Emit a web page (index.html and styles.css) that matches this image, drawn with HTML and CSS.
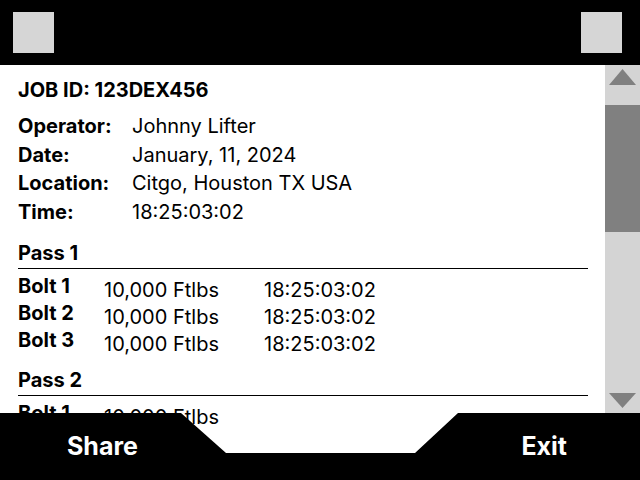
FILE: index.html
```html
<!DOCTYPE html>
<html>
<head>
<meta charset="utf-8">
<link rel="stylesheet" href="styles.css">
</head>
<body>
<div class="screen">
  <header class="topbar">
    <div class="square"></div>
    <div class="square"></div>
  </header>
  <div class="main">
    <section class="content">
      <h1 class="job">JOB ID: 123DEX456</h1>
      <div class="info">
        <div class="label">Operator:</div><div class="value">Johnny Lifter</div>
        <div class="label">Date:</div><div class="value">January, 11, 2024</div>
        <div class="label">Location:</div><div class="value">Citgo, Houston TX USA</div>
        <div class="label">Time:</div><div class="value">18:25:03:02</div>
      </div>
      <div class="pass">
        <h2 class="pass-title">Pass 1</h2>
        <div class="bolts">
          <div class="bolt">Bolt 1</div><div class="torque">10,000 Ftlbs</div><div class="stamp">18:25:03:02</div>
          <div class="bolt">Bolt 2</div><div class="torque">10,000 Ftlbs</div><div class="stamp">18:25:03:02</div>
          <div class="bolt">Bolt 3</div><div class="torque">10,000 Ftlbs</div><div class="stamp">18:25:03:02</div>
        </div>
      </div>
      <div class="pass pass-next">
        <h2 class="pass-title">Pass 2</h2>
        <div class="bolts">
          <div class="bolt">Bolt 1</div><div class="torque">10,000 Ftlbs</div>
        </div>
      </div>
    </section>
    <aside class="scrollbar">
      <div class="arrow arrow-up">
        <svg width="27" height="16" viewBox="0 0 27 16"><polygon points="13.5,0 27,16 0,16" fill="#808080"/></svg>
      </div>
      <div class="thumb"></div>
      <div class="track"></div>
      <div class="arrow arrow-down">
        <svg width="27" height="15" viewBox="0 0 27 15"><polygon points="0,0 27,0 13.5,15" fill="#808080"/></svg>
      </div>
    </aside>
  </div>
  <footer class="bottombar">
    <span class="btn">Share</span>
    <span class="btn">Exit</span>
  </footer>
</div>
</body>
</html>
```

FILE: styles.css
```css
* { box-sizing: border-box; margin: 0; padding: 0; }
html, body { width: 640px; height: 480px; overflow: hidden; background: #fff; }
body { font-family: Inter, "Noto Sans", sans-serif; color: #000; }

.screen { position: relative; width: 640px; height: 480px; display: flex; flex-direction: column; }

.topbar {
  height: 65px;
  background: #000;
  display: flex;
  justify-content: space-between;
  padding: 12px 18px 0 13px;
}
.square { width: 41px; height: 41px; background: #d6d6d6; }

.main { flex: 1; display: flex; min-height: 0; }

.content {
  flex: 1;
  overflow: hidden;
  padding: 13px 17px 0 18px;
}

.job { font-size: 20px; font-weight: 700; line-height: 24px; }

.info {
  display: grid;
  grid-template-columns: 114px auto;
  margin-top: 10px;
  font-size: 20px;
  line-height: 28.67px;
}
.label { font-weight: 700; }

.pass { margin-top: 14px; }
.pass-next { margin-top: 12px; }
.pass-title {
  font-size: 20px;
  font-weight: 700;
  line-height: 24px;
  padding-bottom: 3px;
  border-bottom: 1px solid #000;
}
.bolts {
  display: grid;
  grid-template-columns: 86px 160px auto;
  grid-auto-rows: 27px;
  font-size: 20px;
  line-height: 22px;
  padding-top: 6px;
}
.bolt { font-weight: 700; }
.torque, .stamp { padding-top: 4px; }

.scrollbar {
  width: 35px;
  height: 348px;
  background: #d4d4d4;
  display: flex;
  flex-direction: column;
  align-items: stretch;
}
.arrow { display: flex; justify-content: center; }
.arrow svg { display: block; }
.arrow-up { height: 40px; padding-top: 4px; }
.thumb { height: 127px; background: #808080; }
.track { flex: 1; }
.arrow-down { height: 20px; }

.bottombar {
  position: absolute;
  left: 0;
  bottom: 0;
  width: 640px;
  height: 67px;
  background: #000;
  clip-path: polygon(0 0, 181px 0, 226px 40px, 415px 40px, 458px 0, 640px 0, 640px 67px, 0 67px);
  display: flex;
  justify-content: space-between;
  padding: 18px 73px 0 67px;
}
.btn { color: #fff; font-size: 25px; font-weight: 700; line-height: 30px; }
```
